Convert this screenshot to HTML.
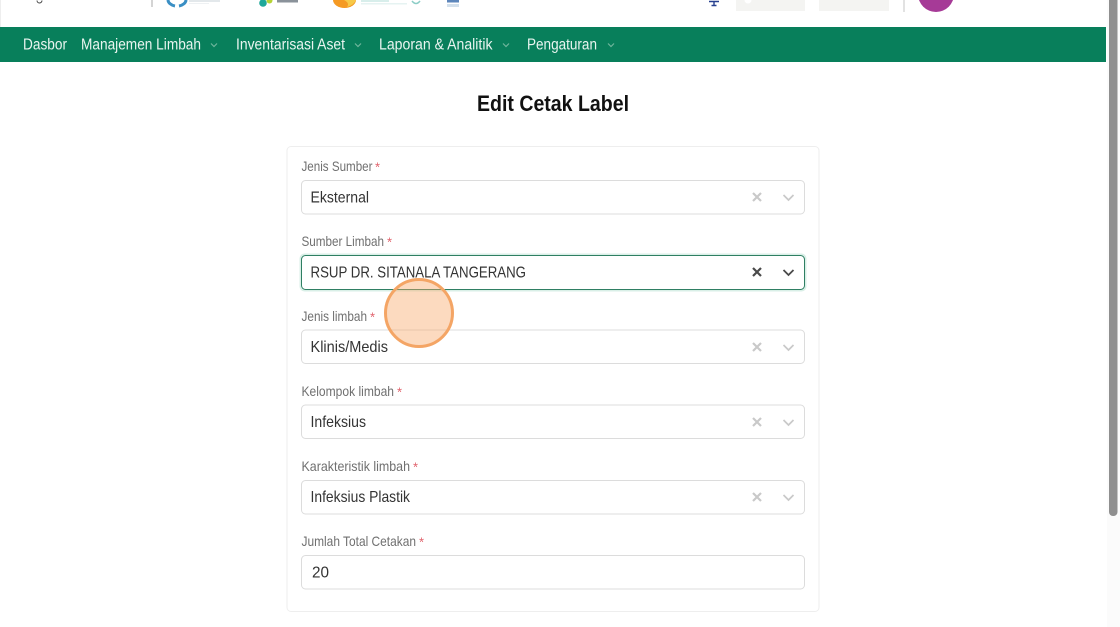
<!DOCTYPE html>
<html><head><meta charset="utf-8"><style>
html,body{margin:0;padding:0;width:1120px;height:627px;overflow:hidden;background:#fff}
svg{display:block}
text{font-family:"Liberation Sans",sans-serif}
.nav{fill:#e9f5f0;font-size:15.5px}
.lb{fill:#707070;font-size:13.6px}
.st{fill:#e0606a;font-size:13px}
.v{fill:#333;font-size:16px}
.box{fill:#fff;stroke:#dcdcdc;stroke-width:1}
.x{stroke:#c9c9c9;stroke-width:2.200;fill:none}
.c{stroke:#c9c9c9;stroke-width:1.700;fill:none}
.nc{stroke:#6fb69c;stroke-width:1.200;fill:none}
</style></head><body>
<svg width="1120" height="627" viewBox="0 0 1120 627" xmlns="http://www.w3.org/2000/svg">
<rect width="1120" height="627" fill="#fff"/>
<rect x="0" y="0" width="1" height="27" fill="#eeeeee"/>
<rect x="1107" y="0" width="13" height="627" fill="#fbfbfb"/>
<rect x="1109" y="0" width="8.500" height="516" rx="4" fill="#8f8f8f"/>
<rect x="1109" y="0" width="8.500" height="10" fill="#8f8f8f"/>

<!-- top header remnants -->
<path d="M37 0.500a2.500 2.500 0 0 0 5 0" fill="none" stroke="#444" stroke-width="1"/>
<rect x="151.500" y="0" width="1" height="7" fill="#aaa"/>
<path d="M168 0a9.500 6.500 0 0 0 7 6M179 6a9.500 6.500 0 0 0 7-6" fill="none" stroke="#3a8fc4" stroke-width="3"/>
<rect x="189" y="0" width="31" height="2" fill="#e3e8eb"/>
<rect x="189" y="3" width="20" height="1" fill="#eef1f3"/>
<circle cx="263" cy="3" r="3.800" fill="#1fa89a"/><circle cx="269.500" cy="0.500" r="3" fill="#b5d334"/>
<rect x="277" y="0" width="21" height="2.500" fill="#8a929a"/>
<path d="M333 0a11.500 8 0 0 0 23 0z" fill="#f59a23"/>
<path d="M344 0q6 3 3 7q7-2 9-7z" fill="#f7c948"/>
<rect x="361" y="0" width="28" height="2" fill="#d8eeeb"/>
<rect x="361" y="3" width="46" height="1.500" fill="#e6f3f2"/>
<path d="M412 1q4 5 8 0" fill="none" stroke="#8ccdc6" stroke-width="1.500"/>
<rect x="447" y="0" width="12" height="2.500" fill="#5d86bb"/><rect x="447" y="4" width="12" height="3" fill="#d3e0ec"/>
<path d="M709 1.500h10M711.500 5.500h5" fill="none" stroke="#27408f" stroke-width="1.500"/>
<rect x="713.300" y="2" width="1.400" height="3" fill="#27408f"/>
<rect x="736" y="0" width="69" height="11" fill="#f4f4f2"/>
<circle cx="748" cy="0" r="3.500" fill="#fff"/>
<rect x="819" y="0" width="70" height="11" fill="#f4f4f2"/>
<rect x="903.500" y="0" width="1" height="12" fill="#c4c4c4"/>
<circle cx="936" cy="-6" r="18" fill="#a63a97"/>

<!-- nav -->
<rect x="0" y="27" width="1106" height="35" fill="#087f5b"/>
<text class="nav" x="23" y="49.500" textLength="44" lengthAdjust="spacingAndGlyphs">Dasbor</text>
<text class="nav" x="81" y="49.500" textLength="120" lengthAdjust="spacingAndGlyphs">Manajemen Limbah</text>
<path class="nc" d="M211 43.500l3 3 3-3"/>
<text class="nav" x="236" y="49.500" textLength="109" lengthAdjust="spacingAndGlyphs">Inventarisasi Aset</text>
<path class="nc" d="M355 43.500l3 3 3-3"/>
<text class="nav" x="379" y="49.500" textLength="113.500" lengthAdjust="spacingAndGlyphs">Laporan &amp; Analitik</text>
<path class="nc" d="M503 43.500l3 3 3-3"/>
<text class="nav" x="527" y="49.500" textLength="70" lengthAdjust="spacingAndGlyphs">Pengaturan</text>
<path class="nc" d="M608 43.500l3 3 3-3"/>

<text x="477" y="111" font-size="22" font-weight="700" fill="#111" textLength="152" lengthAdjust="spacingAndGlyphs">Edit Cetak Label</text>

<rect x="287" y="146.500" width="532" height="465" rx="4" fill="#fff" stroke="#eeeeee"/>

<text class="lb" x="301.500" y="171" textLength="71" lengthAdjust="spacingAndGlyphs">Jenis Sumber</text><text class="st" x="375" y="171.500">*</text>
<rect class="box" x="301.500" y="180.500" width="503" height="33.500" rx="4"/>
<text class="v" x="310.500" y="202.500" textLength="58.500" lengthAdjust="spacingAndGlyphs">Eksternal</text>
<path class="x" d="M753 193l8 8m0-8l-8 8"/><path class="c" d="M783.500 195l5 5 5-5"/>

<text class="lb" x="301.500" y="246" textLength="82.500" lengthAdjust="spacingAndGlyphs">Sumber Limbah</text><text class="st" x="387" y="246.500">*</text>
<rect x="299.500" y="253.500" width="507" height="38" rx="5" fill="#d9efe7"/>
<rect x="301.500" y="255.500" width="503" height="34" rx="4" fill="#fff" stroke="#2f7f63"/>
<text class="v" x="310.500" y="277.500" textLength="215.500" lengthAdjust="spacingAndGlyphs">RSUP DR. SITANALA TANGERANG</text>
<path d="M753 268l8 8m0-8l-8 8" stroke="#4a4a4a" stroke-width="2.200" fill="none"/><path d="M783.500 270l5 5 5-5" stroke="#4a4a4a" stroke-width="1.800" fill="none"/>

<text class="lb" x="301.500" y="321" textLength="65.500" lengthAdjust="spacingAndGlyphs">Jenis limbah</text><text class="st" x="370" y="321.500">*</text>
<rect class="box" x="301.500" y="330" width="503" height="33.500" rx="4"/>
<text class="v" x="310.500" y="352" textLength="77.500" lengthAdjust="spacingAndGlyphs">Klinis/Medis</text>
<path class="x" d="M753 343l8 8m0-8l-8 8"/><path class="c" d="M783.500 345l5 5 5-5"/>

<text class="lb" x="301.500" y="396" textLength="92.500" lengthAdjust="spacingAndGlyphs">Kelompok limbah</text><text class="st" x="397" y="396.500">*</text>
<rect class="box" x="301.500" y="405" width="503" height="33.500" rx="4"/>
<text class="v" x="310.500" y="427" textLength="55.500" lengthAdjust="spacingAndGlyphs">Infeksius</text>
<path class="x" d="M753 418l8 8m0-8l-8 8"/><path class="c" d="M783.500 420l5 5 5-5"/>

<text class="lb" x="301.500" y="471" textLength="108.500" lengthAdjust="spacingAndGlyphs">Karakteristik limbah</text><text class="st" x="413" y="471.500">*</text>
<rect class="box" x="301.500" y="480.500" width="503" height="33.500" rx="4"/>
<text class="v" x="310.500" y="502" textLength="99.500" lengthAdjust="spacingAndGlyphs">Infeksius Plastik</text>
<path class="x" d="M753 493l8 8m0-8l-8 8"/><path class="c" d="M783.500 495l5 5 5-5"/>

<text class="lb" x="301.500" y="546" textLength="114.500" lengthAdjust="spacingAndGlyphs">Jumlah Total Cetakan</text><text class="st" x="419" y="546.500">*</text>
<rect class="box" x="301.500" y="555.500" width="503" height="33.500" rx="4"/>
<text class="v" x="312" y="577.500" textLength="17" lengthAdjust="spacingAndGlyphs">20</text>

<circle cx="419" cy="313" r="33.500" fill="#f8a766" fill-opacity=".42" stroke="#f4a565" stroke-width="3"/>
</svg>
</body></html>
